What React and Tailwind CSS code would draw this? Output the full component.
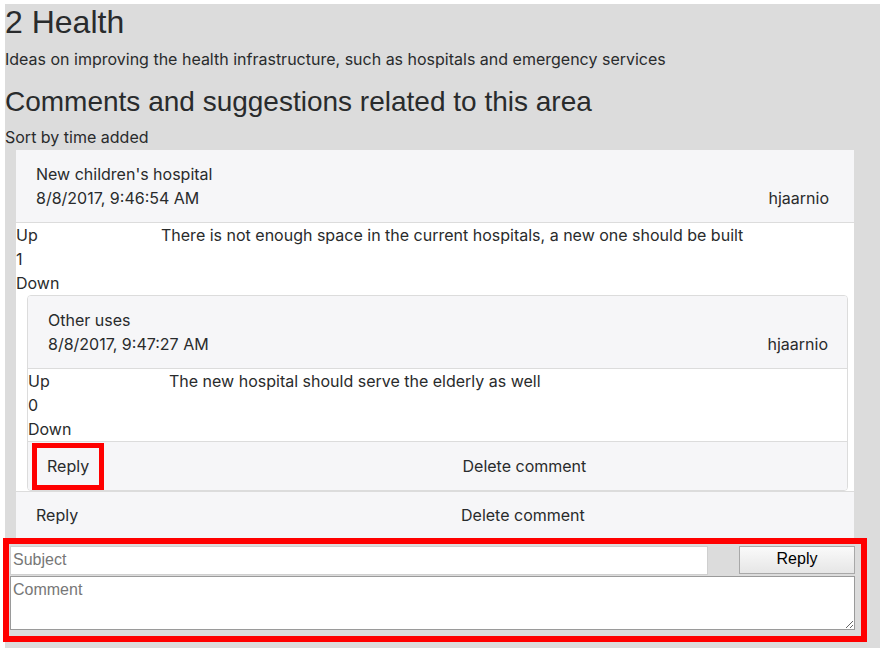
const font = { fontFamily: 'Inter, "Liberation Sans", Arial, sans-serif' };
const headFont = { fontFamily: '"Liberation Sans", Arial, sans-serif' };
const formFont = { fontFamily: '"Liberation Sans", Arial, sans-serif' };

function Header({ title, date, author, authorPad }) {
  return (
    <div className={`border-b border-[#dcdcdc] bg-[#f6f6f8] py-3 pl-5 ${authorPad} leading-6`}>
      <div>{title}</div>
      <div className="flex justify-between">
        <span>{date}</span>
        <span>{author}</span>
      </div>
    </div>
  );
}

function Votes({ count, width, text }) {
  return (
    <div className="flex leading-6">
      <div className={width}>
        <div>Up</div>
        <div>{count}</div>
        <div>Down</div>
      </div>
      <div>{text}</div>
    </div>
  );
}

export default function App() {
  return (
    <div className="min-h-screen bg-white pl-[5px] pt-[4px] text-[16px] text-[#292b2c]" style={font}>
      <div className="w-[875px] bg-[#dcdcdc] pb-[6px]">
        <h1 className="pt-px text-[32px] font-normal leading-[35px]" style={headFont}>2 Health</h1>
        <p className="mt-[7px] leading-6">Ideas on improving the health infrastructure, such as hospitals and emergency services</p>
        <h2 className="mt-[15px] text-[28px] font-normal leading-[31px]" style={headFont}>Comments and suggestions related to this area</h2>
        <div className="mt-[8px] leading-6">Sort by time added</div>

        <div className="ml-[11px] mt-px w-[838px] bg-white">
          <Header title="New children's hospital" date="8/8/2017, 9:46:54 AM" author="hjaarnio" authorPad="pr-[25px]" />
          <Votes count="1" width="w-[145px]" text="There is not enough space in the current hospitals, a new one should be built" />

          <div className="ml-[11px] mr-[6px] overflow-hidden rounded-[4px] border border-[#dcdcdc] bg-white">
            <Header title="Other uses" date="8/8/2017, 9:47:27 AM" author="hjaarnio" authorPad="pr-[19px]" />
            <div className="border-b border-[#dcdcdc]">
              <Votes count="0" width="w-[141px]" text="The new hospital should serve the elderly as well" />
            </div>
            <div className="grid h-[48px] grid-cols-2 items-center bg-[#f6f6f8] leading-6">
              <div className="pl-[4px]">
                <button className="h-[47px] w-[72px] border-[5px] border-[#ff0000] px-[10px] leading-6">Reply</button>
              </div>
              <div className="pl-[25px]">Delete comment</div>
            </div>
          </div>

          <div className="grid h-[47px] grid-cols-2 items-center border-t border-[#dcdcdc] bg-[#f6f6f8] leading-6">
            <div className="pl-5">Reply</div>
            <div className="pl-[26px]">Delete comment</div>
          </div>
        </div>

        <form className="-ml-[2px] w-[864px] border-[6px] border-[#ff0000] pb-[6px] pl-px pr-[6px] pt-[2px]">
          <div className="flex h-[29px] items-stretch justify-between">
            <input
              placeholder="Subject"
              className="w-[698px] border border-[#cfcfcf] bg-white px-[2px] pb-[2px] text-[16px] text-black placeholder:text-[#777]"
              style={formFont}
            />
            <button
              type="button"
              className="mb-px w-[116px] border border-[#a8a8a8] bg-gradient-to-b from-[#fafafa] to-[#e6e6e6] pb-[2px] text-[16px] text-black"
              style={formFont}
            >
              Reply
            </button>
          </div>
          <textarea
            placeholder="Comment"
            className="mt-px block h-[54px] w-full border border-[#9a9a9a] bg-white px-[2px] py-px text-[16px] text-black placeholder:text-[#777]"
            style={formFont}
          />
        </form>
      </div>
    </div>
  );
}
